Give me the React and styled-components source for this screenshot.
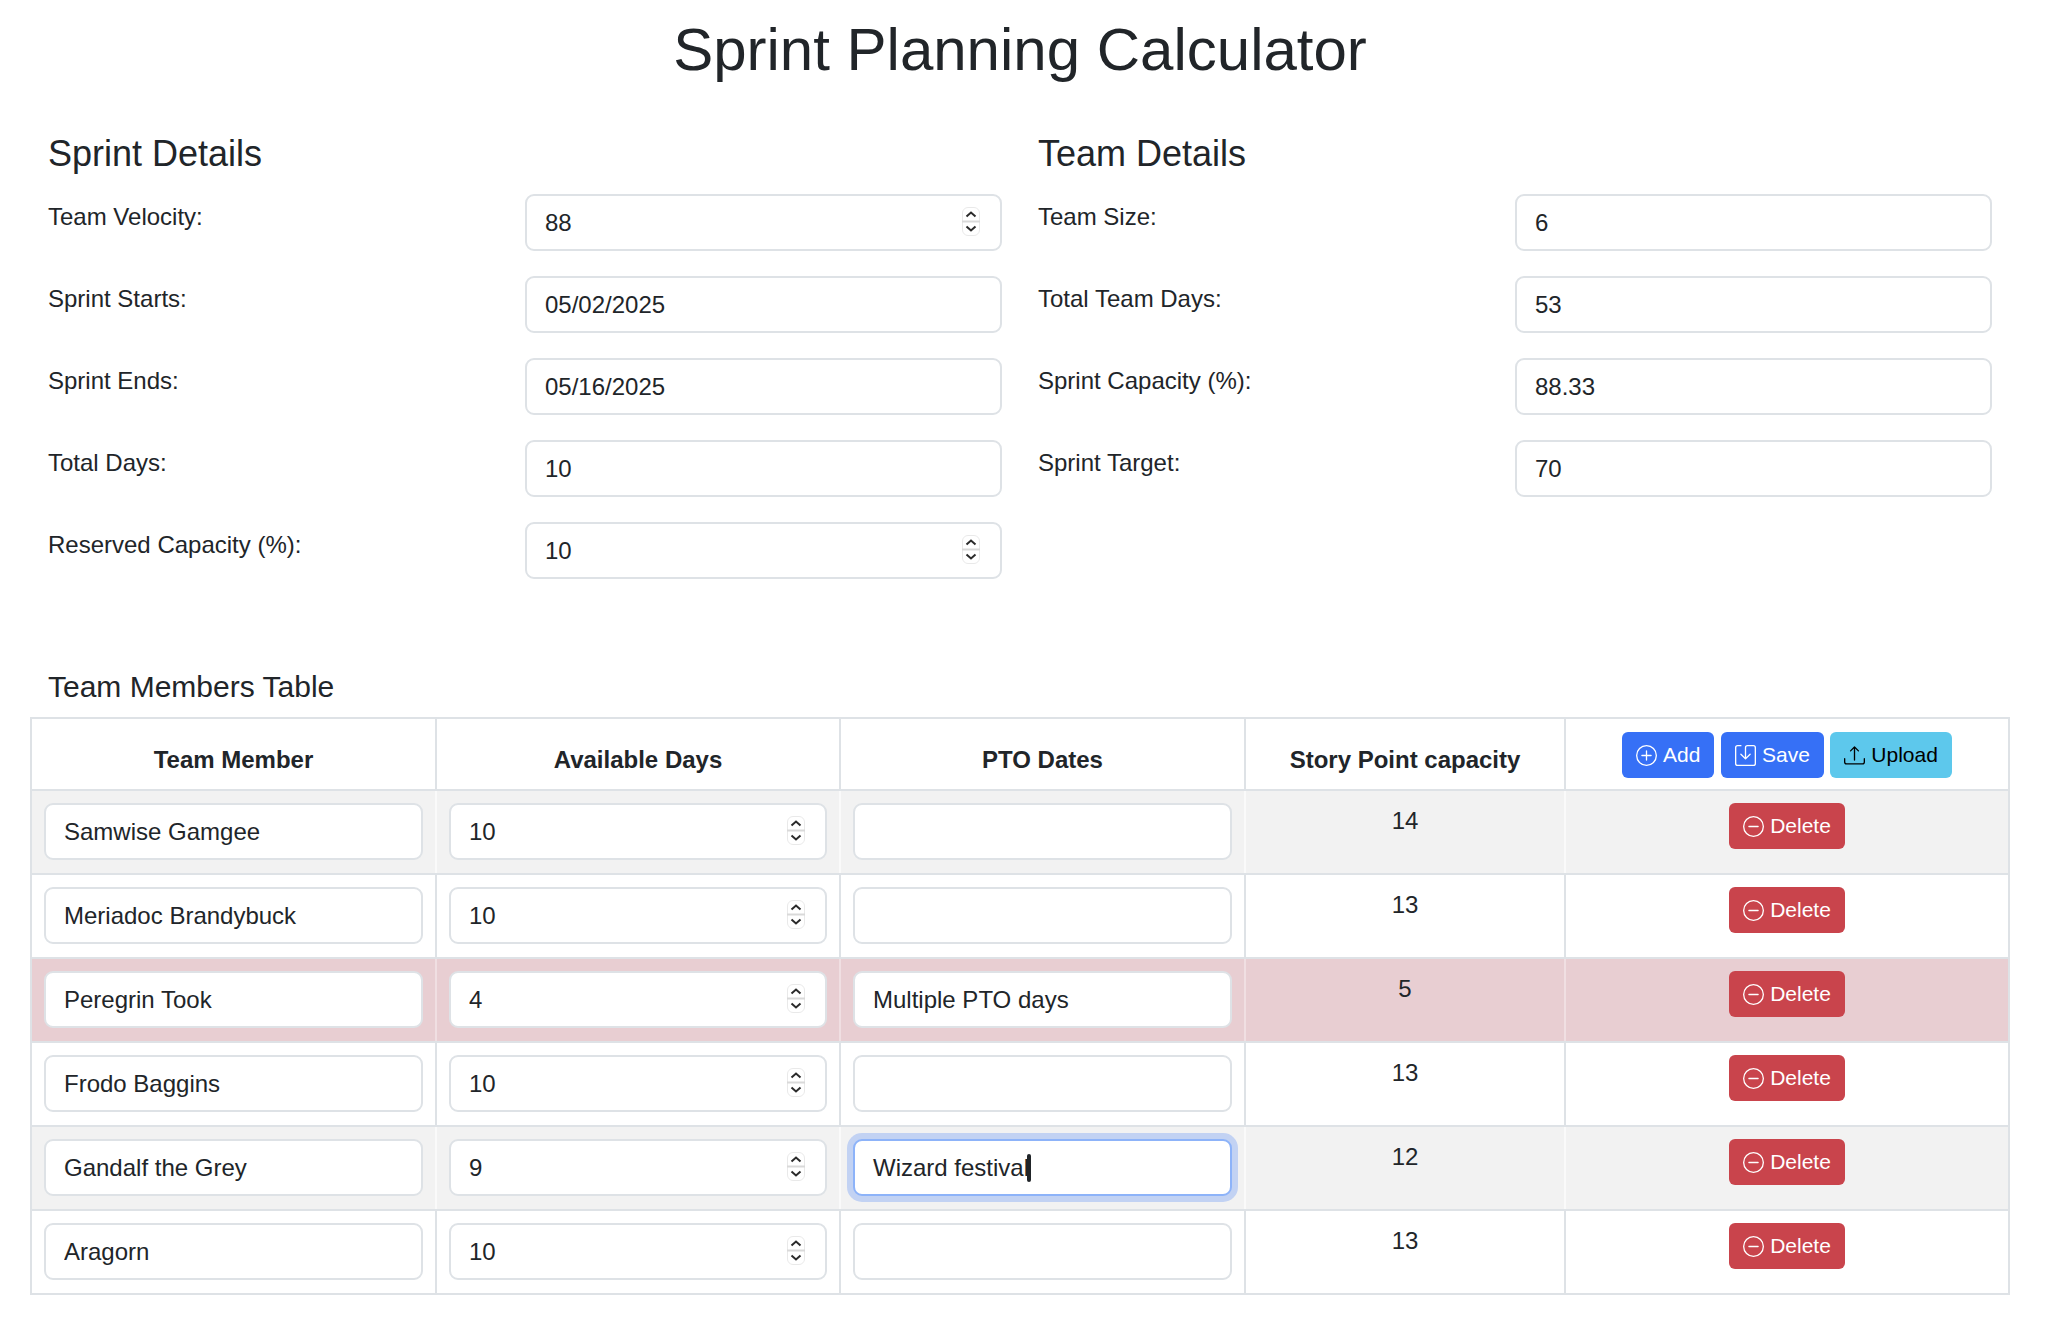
import React from 'react';
import styled, { createGlobalStyle } from 'styled-components';
import { BsPlusCircle, BsSave, BsUpload, BsDashCircle } from 'react-icons/bs';

const Global = createGlobalStyle`
  html, body { margin: 0; padding: 0; background: #fff; }
  body { font-family: "Liberation Sans", Arial, sans-serif; font-size: 24px; line-height: 36px; color: #212529; }
`;

const Page = styled.div`
  width: 2040px;
  display: flex;
  flex-direction: column;
`;
const Title = styled.h1`
  margin: 0;
  padding-top: 14px;
  height: 72px;
  box-sizing: content-box;
  font-size: 60px;
  line-height: 72px;
  font-weight: 400;
  text-align: center;
`;
const Details = styled.div`
  display: grid;
  grid-template-columns: 1fr 1fr;
  gap: 36px;
  padding: 0 48px;
  margin-top: 46px;
`;
const SectionTitle = styled.h4`
  margin: 0 0 19px;
  font-size: 36px;
  line-height: 43px;
  font-weight: 400;
`;
const FormRow = styled.div`
  display: grid;
  grid-template-columns: 1fr 1fr;
  margin-bottom: 25px;
`;
const Label = styled.label`
  display: block;
  padding-top: 5px;
`;
const FieldWrap = styled.div`
  position: relative;
`;
const inputCss = `
  display: block;
  box-sizing: border-box;
  width: 100%;
  height: 57px;
  padding: 0 18px;
  border: 2px solid #dee2e6;
  border-radius: 9px;
  background: #fff;
  font-family: "Liberation Sans", Arial, sans-serif;
  font-size: 24px;
  line-height: 36px;
  color: #212529;
  outline: none;
`;
const Input = styled.input`
  ${inputCss}
`;
const FocusedInput = styled.div`
  ${inputCss}
  display: flex;
  align-items: center;
  border-color: #8db3f9;
  box-shadow: 0 0 0 6px #c2d2f3;
`;
const Caret = styled.span`
  display: block;
  width: 4px;
  height: 28px;
  margin-left: -2px;
  border-radius: 2px;
  background: #212529;
`;
const SpinBox = styled.svg`
  position: absolute;
  right: 22px;
  top: 13px;
  width: 18px;
  height: 29px;
`;
const TableTitle = styled.h5`
  margin: 65px 0 0 48px;
  font-size: 30px;
  line-height: 36px;
  font-weight: 400;
`;
const Table = styled.table`
  width: 1978px;
  margin: 12px 0 0 30px;
  border-collapse: collapse;
  table-layout: fixed;
`;
const Th = styled.th`
  border: 2px solid #dee2e6;
  padding: 13px 12px 11px;
  vertical-align: bottom;
  text-align: center;
  font-weight: 700;
`;
const Row = styled.tr`
  background: ${p => p.$bg};
`;
const Td = styled.td`
  border: 2px solid #dee2e6;
  border-left-color: ${p => p.$line};
  border-right-color: ${p => p.$line};
  padding: 12px 12px 13px;
  vertical-align: top;
  text-align: ${p => (p.$center ? 'center' : 'left')};
  &:first-child { border-left-color: #dee2e6; }
  &:last-child { border-right-color: #dee2e6; }
`;
const Actions = styled.div`
  display: flex;
  justify-content: center;
  gap: 6.5px;
`;
const Button = styled.button`
  display: inline-flex;
  align-items: center;
  gap: 6px;
  box-sizing: border-box;
  height: 46px;
  padding: 0 14px;
  border: 0;
  border-radius: 6px;
  background: ${p => p.$bg};
  color: ${p => p.$fg};
  font-family: "Liberation Sans", Arial, sans-serif;
  font-size: 21px;
  line-height: 32px;
`;

const Spinner = () => (
  <SpinBox viewBox="0 0 18 29">
    <rect x="0.5" y="0.5" width="17" height="28" rx="5.5" fill="#fff" stroke="#e9e9e9" strokeWidth="1" />
    <rect x="0" y="13.5" width="18" height="2" fill="#d9d9d9" />
    <path d="M4.5 9.5 L9 5.5 L13.5 9.5" fill="none" stroke="#2b2b2b" strokeWidth="2" />
    <path d="M4.5 19.5 L9 23.5 L13.5 19.5" fill="none" stroke="#2b2b2b" strokeWidth="2" />
  </SpinBox>
);

const Field = ({ value, spin }) => (
  <FieldWrap>
    <Input readOnly value={value} />
    {spin && <Spinner />}
  </FieldWrap>
);

const sprint = [
  ['Team Velocity:', '88', true],
  ['Sprint Starts:', '05/02/2025'],
  ['Sprint Ends:', '05/16/2025'],
  ['Total Days:', '10'],
  ['Reserved Capacity (%):', '10', true],
];
const team = [
  ['Team Size:', '6'],
  ['Total Team Days:', '53'],
  ['Sprint Capacity (%):', '88.33'],
  ['Sprint Target:', '70'],
];
const members = [
  { name: 'Samwise Gamgee', days: '10', pto: '', sp: 14, bg: '#f2f2f2', line: '#fafafa' },
  { name: 'Meriadoc Brandybuck', days: '10', pto: '', sp: 13, bg: '#fff', line: '#dee2e6' },
  { name: 'Peregrin Took', days: '4', pto: 'Multiple PTO days', sp: 5, bg: '#e8ced2', line: '#f0dfe2' },
  { name: 'Frodo Baggins', days: '10', pto: '', sp: 13, bg: '#fff', line: '#dee2e6' },
  { name: 'Gandalf the Grey', days: '9', pto: 'Wizard festival', sp: 12, bg: '#f2f2f2', line: '#fafafa', focus: true },
  { name: 'Aragorn', days: '10', pto: '', sp: 13, bg: '#fff', line: '#dee2e6' },
];
const BLUE = '#3670f6';
const CYAN = '#5dc8ec';
const RED = '#c9444c';

const Section = ({ title, rows }) => (
  <div>
    <SectionTitle>{title}</SectionTitle>
    {rows.map(([l, v, s]) => (
      <FormRow key={l}>
        <Label>{l}</Label>
        <Field value={v} spin={s} />
      </FormRow>
    ))}
  </div>
);

export default function App() {
  return (
    <Page>
      <Global />
      <Title>Sprint Planning Calculator</Title>
      <Details>
        <Section title="Sprint Details" rows={sprint} />
        <Section title="Team Details" rows={team} />
      </Details>
      <TableTitle>Team Members Table</TableTitle>
      <Table>
        <colgroup>
          <col width="405" />
          <col width="404" />
          <col width="405" />
          <col width="320" />
          <col width="444" />
        </colgroup>
        <thead>
          <tr>
            <Th>Team Member</Th>
            <Th>Available Days</Th>
            <Th>PTO Dates</Th>
            <Th>Story Point capacity</Th>
            <Th>
              <Actions>
                <Button $bg={BLUE} $fg="#fff"><BsPlusCircle size={21} />Add</Button>
                <Button $bg={BLUE} $fg="#fff"><BsSave size={21} />Save</Button>
                <Button $bg={CYAN} $fg="#000"><BsUpload size={21} />Upload</Button>
              </Actions>
            </Th>
          </tr>
        </thead>
        <tbody>
          {members.map(m => (
            <Row key={m.name} $bg={m.bg}>
              <Td $line={m.line}><Field value={m.name} /></Td>
              <Td $line={m.line}><Field value={m.days} spin /></Td>
              <Td $line={m.line}>
                {m.focus ? (
                  <FocusedInput>{m.pto}<Caret /></FocusedInput>
                ) : (
                  <Field value={m.pto} />
                )}
              </Td>
              <Td $line={m.line} $center>{m.sp}</Td>
              <Td $line={m.line} $center>
                <Button $bg={RED} $fg="#fff"><BsDashCircle size={21} />Delete</Button>
              </Td>
            </Row>
          ))}
        </tbody>
      </Table>
    </Page>
  );
}
